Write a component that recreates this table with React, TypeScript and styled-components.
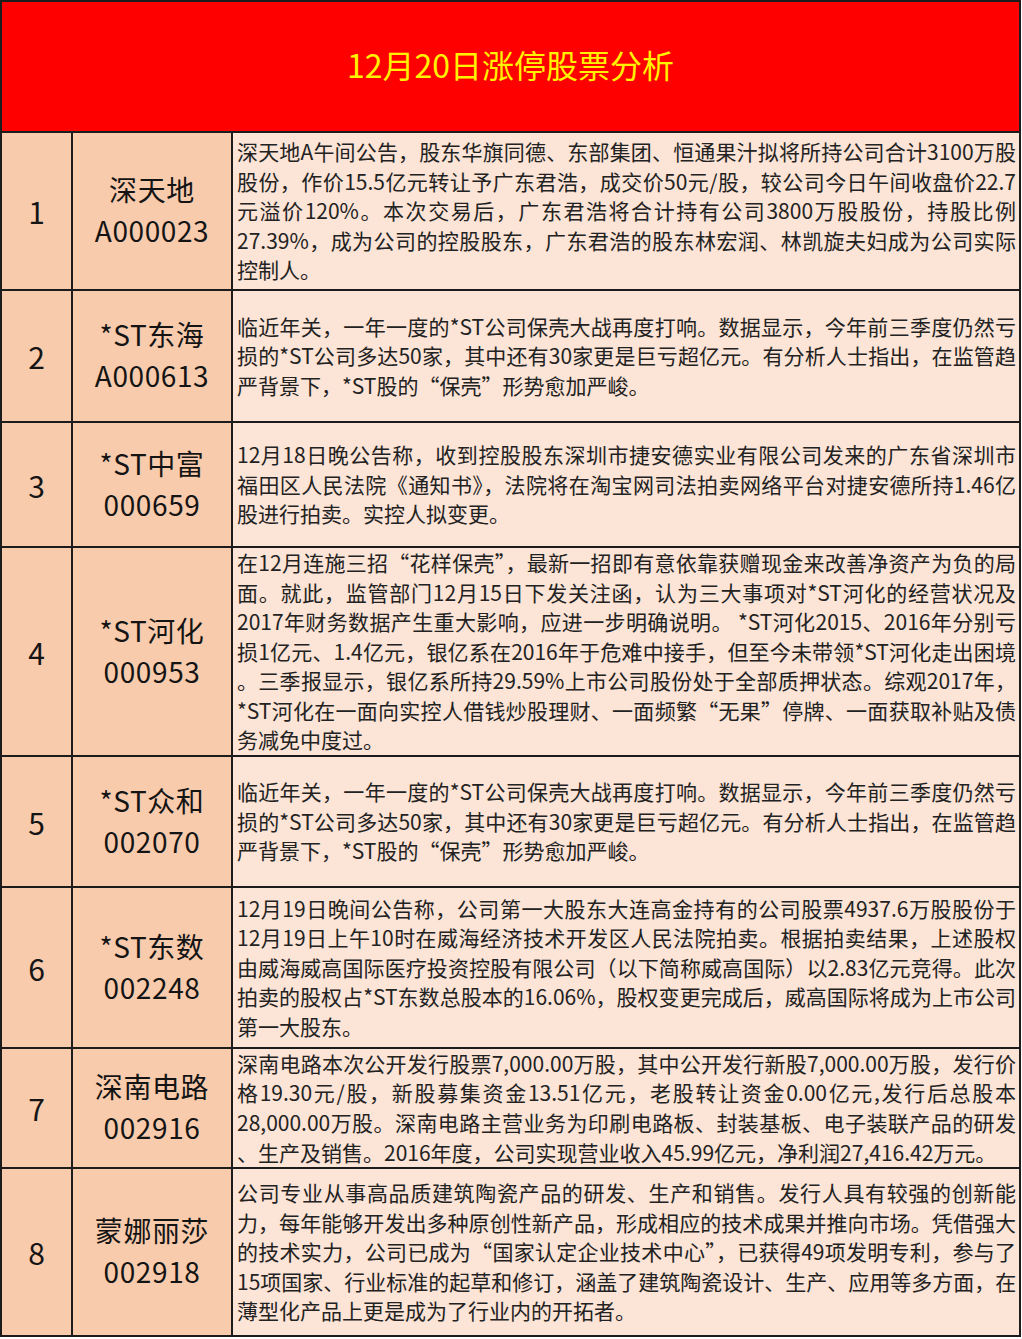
import styled, { createGlobalStyle } from "styled-components";

const GlobalStyle = createGlobalStyle`
  html, body {
    margin: 0;
    padding: 0;
    background: #ffffff;
  }
  body {
    font-family: "Noto Sans CJK SC", "Noto Sans", sans-serif;
  }
`;

const Sheet = styled.div`
  box-sizing: border-box;
  width: 1021px;
  border-top: 2px solid #1c1c1c;
  border-left: 2px solid #1c1c1c;
  border-right: 2px solid #1c1c1c;
`;

const Header = styled.div`
  box-sizing: border-box;
  height: 131px;
  background-color: #ff0000;
  border-bottom: 2px solid #1c1c1c;
  display: flex;
  align-items: center;
  justify-content: center;
`;

const Title = styled.h1`
  margin: 0;
  font-size: 32px;
  font-weight: 400;
  color: #fff200;
  letter-spacing: 0;
  padding-bottom: 6px;
`;

const Row = styled.div<{ $h: number }>`
  box-sizing: border-box;
  height: ${(p) => p.$h}px;
  display: grid;
  grid-template-columns: 71px 160px 1fr;
  border-bottom: 2px solid #1c1c1c;
`;

const NoCell = styled.div`
  box-sizing: border-box;
  background-color: #f8cbad;
  border-right: 2px solid #1c1c1c;
  display: flex;
  align-items: center;
  justify-content: center;
  font-size: 30px;
  color: #151515;
`;

const NameCell = styled.div`
  box-sizing: border-box;
  background-color: #f8cbad;
  border-right: 2px solid #1c1c1c;
  display: flex;
  flex-direction: column;
  align-items: center;
  justify-content: center;
  font-size: 28px;
  line-height: 41px;
  letter-spacing: 0.6px;
  color: #141414;
  padding-bottom: 2px;
`;

const TextCell = styled.div`
  box-sizing: border-box;
  background-color: #fce4d6;
  display: flex;
  flex-direction: column;
  justify-content: center;
  padding: 0 3px 0 4px;
  font-size: 21px;
  line-height: 29.6px;
  color: #222222;
  overflow: hidden;
`;

const Line = styled.div<{ $last: boolean }>`
  white-space: nowrap;
  text-align: ${(p) => (p.$last ? "left" : "justify")};
  text-align-last: ${(p) => (p.$last ? "left" : "justify")};
`;

type Stock = {
  no: string;
  name: string;
  code: string;
  h: number;
  lines: string[];
};

const baoke = [
  "临近年关，一年一度的*ST公司保壳大战再度打响。数据显示，今年前三季度仍然亏",
  "损的*ST公司多达50家，其中还有30家更是巨亏超亿元。有分析人士指出，在监管趋",
  "严背景下，*ST股的“保壳”形势愈加严峻。",
];

const stocks: Stock[] = [
  {
    no: "1",
    name: "深天地",
    code: "A000023",
    h: 158,
    lines: [
      "深天地A午间公告，股东华旗同德、东部集团、恒通果汁拟将所持公司合计3100万股",
      "股份，作价15.5亿元转让予广东君浩，成交价50元/股，较公司今日午间收盘价22.7",
      "元溢价120%。本次交易后，广东君浩将合计持有公司3800万股股份，持股比例",
      "27.39%，成为公司的控股股东，广东君浩的股东林宏润、林凯旋夫妇成为公司实际",
      "控制人。",
    ],
  },
  { no: "2", name: "*ST东海", code: "A000613", h: 132, lines: baoke },
  {
    no: "3",
    name: "*ST中富",
    code: "000659",
    h: 125,
    lines: [
      "12月18日晚公告称，收到控股股东深圳市捷安德实业有限公司发来的广东省深圳市",
      "福田区人民法院《通知书》，法院将在淘宝网司法拍卖网络平台对捷安德所持1.46亿",
      "股进行拍卖。实控人拟变更。",
    ],
  },
  {
    no: "4",
    name: "*ST河化",
    code: "000953",
    h: 209,
    lines: [
      "在12月连施三招“花样保壳”，最新一招即有意依靠获赠现金来改善净资产为负的局",
      "面。就此，监管部门12月15日下发关注函，认为三大事项对*ST河化的经营状况及",
      "2017年财务数据产生重大影响，应进一步明确说明。 *ST河化2015、2016年分别亏",
      "损1亿元、1.4亿元，银亿系在2016年于危难中接手，但至今未带领*ST河化走出困境",
      "。三季报显示，银亿系所持29.59%上市公司股份处于全部质押状态。综观2017年，",
      "*ST河化在一面向实控人借钱炒股理财、一面频繁“无果”停牌、一面获取补贴及债",
      "务减免中度过。",
    ],
  },
  { no: "5", name: "*ST众和", code: "002070", h: 131, lines: baoke },
  {
    no: "6",
    name: "*ST东数",
    code: "002248",
    h: 161,
    lines: [
      "12月19日晚间公告称，公司第一大股东大连高金持有的公司股票4937.6万股股份于",
      "12月19日上午10时在威海经济技术开发区人民法院拍卖。根据拍卖结果，上述股权",
      "由威海威高国际医疗投资控股有限公司（以下简称威高国际）以2.83亿元竞得。此次",
      "拍卖的股权占*ST东数总股本的16.06%，股权变更完成后，威高国际将成为上市公司",
      "第一大股东。",
    ],
  },
  {
    no: "7",
    name: "深南电路",
    code: "002916",
    h: 120,
    lines: [
      "深南电路本次公开发行股票7,000.00万股，其中公开发行新股7,000.00万股，发行价",
      "格19.30元/股，新股募集资金13.51亿元，老股转让资金0.00亿元,发行后总股本",
      "28,000.00万股。深南电路主营业务为印刷电路板、封装基板、电子装联产品的研发",
      "、生产及销售。2016年度，公司实现营业收入45.99亿元，净利润27,416.42万元。",
    ],
  },
  {
    no: "8",
    name: "蒙娜丽莎",
    code: "002918",
    h: 168,
    lines: [
      "公司专业从事高品质建筑陶瓷产品的研发、生产和销售。发行人具有较强的创新能",
      "力，每年能够开发出多种原创性新产品，形成相应的技术成果并推向市场。凭借强大",
      "的技术实力，公司已成为“国家认定企业技术中心”，已获得49项发明专利，参与了",
      "15项国家、行业标准的起草和修订，涵盖了建筑陶瓷设计、生产、应用等多方面，在",
      "薄型化产品上更是成为了行业内的开拓者。",
    ],
  },
];

function App() {
  return (
    <>
      <GlobalStyle />
      <Sheet lang="zh-CN">
        <Header>
          <Title>12月20日涨停股票分析</Title>
        </Header>
        {stocks.map((s) => (
          <Row key={s.no} $h={s.h}>
            <NoCell>{s.no}</NoCell>
            <NameCell>
              <span>{s.name}</span>
              <span>{s.code}</span>
            </NameCell>
            <TextCell>
              {s.lines.map((line, i) => (
                <Line key={i} $last={i === s.lines.length - 1}>
                  {line}
                </Line>
              ))}
            </TextCell>
          </Row>
        ))}
      </Sheet>
    </>
  );
}

export default App;
